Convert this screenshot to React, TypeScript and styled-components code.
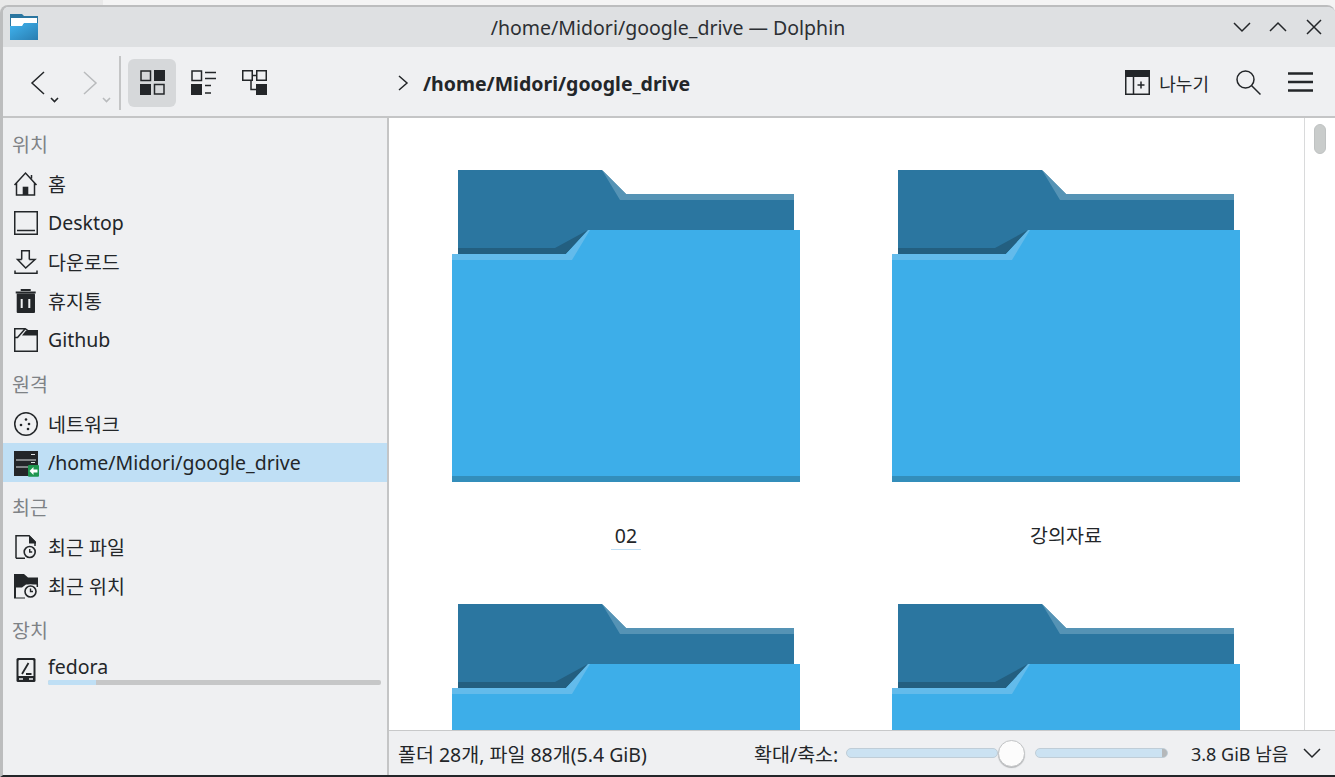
import React from "react";
import styled, { createGlobalStyle } from "styled-components";

const ink = "#232629";
const panel = "#eff0f2";

const Global = createGlobalStyle`
  html, body { margin: 0; padding: 0; height: 100%; overflow: hidden; background: #f2f2f2; }
  body { font-family: "Noto Sans", "Noto Sans CJK KR", sans-serif; color: ${ink}; font-size: 19.5px; }
  * { box-sizing: border-box; }
`;

const Page = styled.div`
  width: 1335px;
  height: 777px;
  padding-top: 5px;
  background: linear-gradient(90deg, #e9e9e9 103px, #f4f4f4 103px);
  overflow: hidden;
`;

const Window = styled.div`
  width: 1335px;
  height: 772px;
  display: flex;
  flex-direction: column;
  border-top: 2px solid #bcbdbe;
  border-left: 3px solid #bcbdbe;
  border-bottom: 2px solid ${ink};
  border-radius: 8px 8px 0 0;
  overflow: hidden;
  background: ${panel};
`;

const TitleBar = styled.div`
  height: 40px;
  flex: none;
  display: grid;
  grid-template-columns: 1fr auto 1fr;
  align-items: center;
  background: #dee0e2;
  padding: 0 12px 0 7px;
`;

const TitleText = styled.div`
  color: #2c2f33;
  padding-left: 3px;
`;

const WindowButtons = styled.div`
  display: flex;
  justify-content: flex-end;
  gap: 18px;
`;

const Toolbar = styled.div`
  height: 71px;
  flex: none;
  display: flex;
  align-items: center;
  border-bottom: 2px solid #c4c5c6;
  padding: 2px 22px 0 0;
`;

const NavGroup = styled.div`
  width: 395px;
  flex: none;
  display: flex;
  align-items: center;
  padding-left: 28px;
`;

const HistoryButton = styled.div<{ $w: number }>`
  width: ${(p) => p.$w}px;
  flex: none;
  display: flex;
  gap: 5px;
  align-items: flex-end;
`;

const Separator = styled.div`
  width: 2px;
  height: 54px;
  flex: none;
  background: #c4c5c6;
  margin-right: 7px;
`;

const ViewButton = styled.div<{ $active?: boolean }>`
  width: 48px;
  height: 48px;
  flex: none;
  margin-right: 3px;
  border-radius: 6px;
  display: flex;
  align-items: center;
  justify-content: center;
  background: ${(p) => (p.$active ? "#d6d8da" : "transparent")};
`;

const Crumb = styled.div`
  flex: 1;
  display: flex;
  align-items: center;
  gap: 15px;
  font-weight: 700;
`;

const CrumbText = styled.span`
  margin-top: 2px;
`;

const ToolActions = styled.div`
  display: flex;
  align-items: center;
`;

const SplitLabel = styled.span`
  font-size: 18px;
  margin: 0 27px 0 9px;
`;

const MenuGap = styled.div`
  width: 27px;
`;

const Body = styled.div`
  flex: 1;
  min-height: 0;
  display: flex;
`;

const Sidebar = styled.div`
  width: 386px;
  flex: none;
  padding-top: 6px;
  border-right: 2px solid #c4c5c6;
`;

const Section = styled.div`
  margin-bottom: 5px;
`;

const SectionTitle = styled.div`
  height: 40px;
  padding: 0 0 2px 9px;
  display: flex;
  align-items: center;
  color: #7e8286;
`;

const Place = styled.div<{ $selected?: boolean }>`
  height: 39px;
  display: flex;
  align-items: center;
  gap: 10px;
  padding-left: 11px;
  background: ${(p) => (p.$selected ? "#bfdff5" : "transparent")};
`;

const DeviceInfo = styled.div`
  flex: 1;
  margin-right: 6px;
  line-height: 26px;
`;

const UsageBar = styled.div`
  height: 5px;
  border-radius: 2px;
  background: #c6c7c8;
  overflow: hidden;
`;

const UsageFill = styled.div`
  height: 100%;
  background: #bfdff5;
`;

const Main = styled.div`
  flex: 1;
  min-width: 0;
  display: flex;
  flex-direction: column;
`;

const ViewArea = styled.div`
  flex: 1;
  min-height: 0;
  display: flex;
  background: #fff;
`;

const Grid = styled.div`
  flex: 1;
  overflow: hidden;
  padding: 52px 0 0 63px;
  display: grid;
  grid-template-columns: 348px 348px;
  grid-auto-rows: 434px;
  column-gap: 92px;
`;

const FolderItem = styled.div`
  display: flex;
  flex-direction: column;
  align-items: center;
`;

const FolderLabel = styled.div<{ $current?: boolean }>`
  margin-top: 40px;
  height: 28px;
  padding: 0 4px;
  line-height: 28px;
  border-bottom: 1px solid ${(p) => (p.$current ? "#bfdff5" : "transparent")};
`;

const ScrollTrack = styled.div`
  width: 31px;
  flex: none;
  border-left: 1px solid #d9dadb;
  padding: 6px 0 0 9px;
  background: #fff;
`;

const ScrollThumb = styled.div`
  width: 12px;
  height: 30px;
  border-radius: 6px;
  background: #c9cccb;
  border: 1px solid #bfc2c2;
`;

const StatusBar = styled.div`
  height: 45px;
  flex: none;
  display: flex;
  align-items: center;
  padding-left: 9px;
  border-top: 1px solid #c8c9ca;
  white-space: nowrap;
`;

const StatusText = styled.div`
  width: 356px;
  flex: none;
`;

const ZoomLabel = styled.div`
  width: 92px;
  flex: none;
`;

const SliderTrack = styled.div<{ $w: number; $end?: boolean }>`
  width: ${(p) => p.$w}px;
  height: 10px;
  flex: none;
  border-radius: 5px;
  background: ${(p) =>
    p.$end ? "linear-gradient(90deg, #cbe2f2 96%, #b5b8ba 96%)" : "#cbe2f2"};
  border: 1px solid #bfcdd7;
`;

const SliderHandle = styled.div`
  width: 27px;
  height: 27px;
  flex: none;
  border-radius: 50%;
  background: #fcfcfc;
  border: 1px solid #c2c4c6;
  box-shadow: 0 1px 1px #b4b6b8;
  margin-right: 10px;
`;

const FreeSpace = styled.div`
  font-size: 18px;
  margin: 0 15px 0 23px;
`;

const Glyph = styled.svg.attrs<{ $w?: number; $h?: number; stroke?: string; strokeWidth?: number }>((p) => ({
  fill: "none",
  stroke: p.stroke ?? ink,
  strokeWidth: p.strokeWidth ?? 1.5,
}))`
  display: block;
  flex: none;
  overflow: visible;
  width: ${(p) => p.$w ?? 24}px;
  height: ${(p) => p.$h ?? p.$w ?? 24}px;
`;

const DropTick = styled(Glyph)`
  margin-bottom: -8px;
`;

const ClockBadge = ({ cx, cy, r }: { cx: number; cy: number; r: number }) => (
  <>
    <circle cx={cx} cy={cy} r={r + 1.5} fill={panel} stroke="none" />
    <circle cx={cx} cy={cy} r={r} strokeWidth={1.6} />
    <path d={`M${cx} ${cy - 3}v3h2.5`} strokeWidth={1.4} />
  </>
);

const AppIcon = () => (
  <Glyph $w={28} $h={26} viewBox="0 0 28 26" stroke="none">
    <defs>
      <linearGradient id="appf" x1="0" y1="0" x2="1" y2="1">
        <stop offset="0" stopColor="#40b4f0" />
        <stop offset="1" stopColor="#2a7db0" />
      </linearGradient>
    </defs>
    <path d="M0 0h12l2 2h14v10H0z" fill="#2b76a0" />
    <rect x="1" y="4" width="26" height="6" fill="#fff" />
    <rect x="1" y="10" width="12" height="2" fill="#fff" />
    <path d="M0 26V12h12l2-3h14v17z" fill="url(#appf)" />
  </Glyph>
);

const IconsIcon = () => (
  <Glyph $w={25} viewBox="0 0 25 25">
    <rect x="1" y="1" width="9.5" height="9.5" />
    <rect x="14" y="0" width="11" height="11" fill={ink} stroke="none" />
    <rect x="0" y="14" width="11" height="11" fill={ink} stroke="none" />
    <rect x="14.5" y="14.5" width="9.5" height="9.5" />
  </Glyph>
);

const CompactIcon = () => (
  <Glyph $w={25} viewBox="0 0 25 25">
    <rect x="1" y="1" width="9.5" height="9.5" />
    <rect x="0" y="14" width="11" height="11" fill={ink} stroke="none" />
    <path d="M14 2.5h11M14 8.5h11M14 15.5h6M14 23h6" />
  </Glyph>
);

const TreeIcon = () => (
  <Glyph $w={25} viewBox="0 0 25 25">
    <rect x=".75" y=".75" width="9.5" height="9.5" />
    <rect x="14.75" y=".75" width="9.5" height="9.5" />
    <rect x="14" y="14" width="11" height="11" fill={ink} stroke="none" />
    <path d="M10 5.5h5M9 10v9.5h5" />
  </Glyph>
);

const SplitIcon = () => (
  <Glyph $w={25} viewBox="0 0 25 25">
    <rect x=".75" y=".75" width="23.5" height="23.5" />
    <rect width="25" height="7" fill={ink} stroke="none" />
    <path d="M8.5 7v17M12.5 15h7M16 11.5v7" />
  </Glyph>
);

const SearchIcon = () => (
  <Glyph $w={25} viewBox="0 0 25 25">
    <circle cx="9.5" cy="9.5" r="8.5" />
    <path d="M15.5 15.5L24.5 24.5" />
  </Glyph>
);

const MenuIcon = () => (
  <Glyph $w={25} viewBox="0 0 25 25">
    <path d="M0 3.5h25M0 12h25M0 20.5h25" strokeWidth={2.6} />
  </Glyph>
);

const HomeIcon = () => (
  <Glyph viewBox="0 0 24 24">
    <path d="M.5 13L11.5 1l11 12M2.5 11v12h18V11M17.5 3v3.5" />
    <rect x="8.7" y="14.7" width="5.6" height="8.3" fill={ink} stroke="none" />
  </Glyph>
);

const DesktopIcon = () => (
  <Glyph viewBox="0 0 24 24">
    <rect x=".75" y=".75" width="22.5" height="22.5" />
    <path d="M3 19.5h18" />
  </Glyph>
);

const DownloadIcon = () => (
  <Glyph viewBox="0 0 24 24">
    <path d="M7.7 9.5V.75h7.6V9.5M7.7 9.5H3.5l8.2 8.5 9.3-8.5h-5.7M1 20.5v2.7h22v-2.7" />
  </Glyph>
);

const TrashIcon = () => (
  <Glyph viewBox="0 0 24 24" stroke="none">
    <rect x="6.7" y="0" width="10" height="2" fill={ink} />
    <rect x="1.7" y="2.5" width="20" height="2" fill={ink} />
    <rect x="2.7" y="4.5" width="18.3" height="19.5" rx="1" fill={ink} />
    <rect x="6.7" y="10" width="2" height="9" fill={panel} />
    <rect x="14.3" y="10" width="2" height="9" fill={panel} />
  </Glyph>
);

const FolderLinkIcon = () => (
  <Glyph viewBox="0 0 24 24">
    <path d="M.75 23.25V.75h10.5l3 2h9v20.5zM11 1L3.5 9.5H.75" />
    <path d="M12 2.5h11.5v5H8z" fill={ink} stroke="none" />
  </Glyph>
);

const NetworkIcon = () => (
  <Glyph viewBox="0 0 24 24">
    <circle cx="12" cy="12" r="11.25" />
    <circle cx="7" cy="13" r="1.3" fill={ink} stroke="none" />
    <circle cx="12" cy="7.5" r="1.3" fill={ink} stroke="none" />
    <circle cx="15" cy="12" r="1.3" fill={ink} stroke="none" />
    <circle cx="14" cy="17" r="1.3" fill={ink} stroke="none" />
  </Glyph>
);

const RemoteIcon = () => (
  <Glyph viewBox="0 0 24 24" stroke="none">
    <rect width="24" height="25" fill={ink} />
    <path d="M2 9h20M2 16h20" stroke="#dfe3e6" strokeWidth={1} />
    <path d="M17 3.5h4M17 11.5h4" stroke="#dfe3e6" strokeWidth={1.2} />
    <rect x="14" y="14" width="11" height="11.7" rx="1" fill="#1e9650" />
    <path d="M15.5 20l4-4v2.5h4v3h-4V24z" fill="#fff" />
  </Glyph>
);

const RecentFileIcon = () => (
  <Glyph viewBox="0 0 24 24">
    <path d="M2 23.3V.75h13l6 6V11M2 23.3h9" />
    <path d="M15 0l7 7v1.5h-7z" fill={ink} stroke="none" />
    <ClockBadge cx={15.7} cy={17} r={5.5} />
  </Glyph>
);

const RecentPlaceIcon = () => (
  <Glyph viewBox="0 0 24 24">
    <path d="M0 0h10l4 3.5h10v7H12l-4 3H2v10h9v1H0z" fill={ink} stroke="none" />
    <path d="M23.3 10v3" />
    <ClockBadge cx={16.5} cy={17.5} r={5.5} />
  </Glyph>
);

const DriveIcon = () => (
  <Glyph viewBox="0 0 24 24" stroke="none">
    <rect x="2.5" y="0" width="19" height="24" rx="1.5" fill={ink} />
    <path d="M5.5 2h13a1 1 0 0 1 1 1v15h-15V3a1 1 0 0 1 1-1z" fill={panel} />
    <path d="M14.5 5L8 16M12 16h5.5" stroke={ink} strokeWidth={1.8} />
    <path d="M5 21h4M15 21h4" stroke={panel} strokeWidth={1.4} />
  </Glyph>
);

const BigFolder = () => (
  <Glyph $w={348} $h={312} viewBox="0 0 348 312" stroke="none">
    <path d="M6 0H150L174 24H342V90H6z" fill="#2b76a0" />
    <path d="M150 0L174 24H342V30H168z" fill="#5593b5" />
    <path d="M6 78H103L136 60L114 84H6z" fill="#235f80" />
    <path d="M0 84H114L137 60H348V312H0z" fill="#3daee9" />
    <path d="M0 84H114L136 60H138L120 90H0z" fill="#63bbeb" />
    <rect y="306" width="348" height="6" fill="#338ebb" />
  </Glyph>
);

const folders = [{ name: "02", current: true }, { name: "강의자료" }, { name: "" }, { name: "" }];

const sections = [
  {
    title: "위치",
    items: [
      { icon: <HomeIcon />, label: "홈" },
      { icon: <DesktopIcon />, label: "Desktop" },
      { icon: <DownloadIcon />, label: "다운로드" },
      { icon: <TrashIcon />, label: "휴지통" },
      { icon: <FolderLinkIcon />, label: "Github" },
    ],
  },
  {
    title: "원격",
    items: [
      { icon: <NetworkIcon />, label: "네트워크" },
      { icon: <RemoteIcon />, label: "/home/Midori/google_drive", selected: true },
    ],
  },
  {
    title: "최근",
    items: [
      { icon: <RecentFileIcon />, label: "최근 파일" },
      { icon: <RecentPlaceIcon />, label: "최근 위치" },
    ],
  },
];

export default function App() {
  return (
    <Page>
      <Global />
      <Window>
        <TitleBar>
          <AppIcon />
          <TitleText>/home/Midori/google_drive — Dolphin</TitleText>
          <WindowButtons>
            <Glyph $w={18} viewBox="0 0 18 18"><path d="M1 5l8 8 8-8" /></Glyph>
            <Glyph $w={18} viewBox="0 0 18 18"><path d="M1 13l8-8 8 8" /></Glyph>
            <Glyph $w={18} viewBox="0 0 18 18"><path d="M2 2l14 14M16 2L2 16" /></Glyph>
          </WindowButtons>
        </TitleBar>
        <Toolbar>
          <NavGroup>
            <HistoryButton $w={52}>
              <Glyph $w={14} $h={24} viewBox="0 0 14 24"><path d="M13 1L1 12l12 11" /></Glyph>
              <DropTick $w={9} $h={6} viewBox="0 0 9 6" strokeWidth={1.6}><path d="M1 1l3.5 3.5L8 1" /></DropTick>
            </HistoryButton>
            <HistoryButton $w={36}>
              <Glyph $w={14} $h={24} viewBox="0 0 14 24" stroke="#b9bbbd"><path d="M1 1l12 11L1 23" /></Glyph>
              <DropTick $w={9} $h={6} viewBox="0 0 9 6" stroke="#b9bbbd" strokeWidth={1.6}><path d="M1 1l3.5 3.5L8 1" /></DropTick>
            </HistoryButton>
            <Separator />
            <ViewButton $active><IconsIcon /></ViewButton>
            <ViewButton><CompactIcon /></ViewButton>
            <ViewButton><TreeIcon /></ViewButton>
          </NavGroup>
          <Crumb>
            <Glyph $w={10} $h={16} viewBox="0 0 10 16"><path d="M1 1l8 7-8 7" /></Glyph>
            <CrumbText>/home/Midori/google_drive</CrumbText>
          </Crumb>
          <ToolActions>
            <SplitIcon />
            <SplitLabel>나누기</SplitLabel>
            <SearchIcon />
            <MenuGap />
            <MenuIcon />
          </ToolActions>
        </Toolbar>
        <Body>
          <Sidebar>
            {sections.map((s) => (
              <Section key={s.title}>
                <SectionTitle>{s.title}</SectionTitle>
                {s.items.map((it) => (
                  <Place key={it.label} $selected={it.selected}>
                    {it.icon}
                    {it.label}
                  </Place>
                ))}
              </Section>
            ))}
            <Section>
              <SectionTitle>장치</SectionTitle>
              <Place>
                <DriveIcon />
                <DeviceInfo>
                  fedora
                  <UsageBar>
                    <UsageFill style={{ width: `${(48 / 333) * 100}%` }} />
                  </UsageBar>
                </DeviceInfo>
              </Place>
            </Section>
          </Sidebar>
          <Main>
            <ViewArea>
              <Grid>
                {folders.map((f, i) => (
                  <FolderItem key={i}>
                    <BigFolder />
                    <FolderLabel $current={f.current}>{f.name}</FolderLabel>
                  </FolderItem>
                ))}
              </Grid>
              <ScrollTrack>
                <ScrollThumb />
              </ScrollTrack>
            </ViewArea>
            <StatusBar>
              <StatusText>폴더 28개, 파일 88개(5.4 GiB)</StatusText>
              <ZoomLabel>확대/축소:</ZoomLabel>
              <SliderTrack $w={152} />
              <SliderHandle />
              <SliderTrack $w={133} $end />
              <FreeSpace>3.8 GiB 남음</FreeSpace>
              <Glyph $w={18} $h={10} viewBox="0 0 18 10"><path d="M1 1l8 8 8-8" /></Glyph>
            </StatusBar>
          </Main>
        </Body>
      </Window>
    </Page>
  );
}
